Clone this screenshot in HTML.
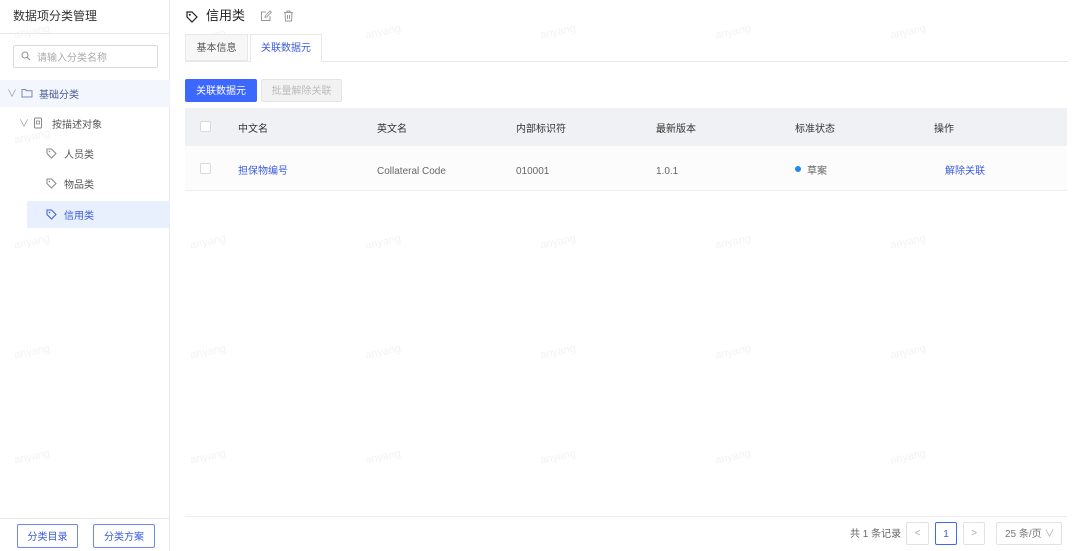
<!DOCTYPE html>
<html><head><meta charset="utf-8"><style>
*{margin:0;padding:0;box-sizing:border-box}
body{width:1080px;height:551px;background:#fff;font-family:"Liberation Sans","Noto Sans CJK SC",sans-serif;font-size:10px;line-height:14px;color:#333;position:relative;overflow:hidden}
.a{position:absolute}
.wm{position:absolute;color:#f3f3f3;font-size:11px;transform:rotate(-12deg)}
.tree{font-size:10px;color:#555}
.th{position:absolute;top:123px;font-size:10px;color:#333}
.td{position:absolute;top:165px;font-size:10px;color:#666}
.cb{position:absolute;width:11px;height:11px;border:1px solid #d9d9d9;background:#fff;border-radius:2px}
</style></head><body>
<!-- watermarks -->
<div class="wm" style="left:14px;top:25px">anyang</div><div class="wm" style="left:190px;top:30px">anyang</div><div class="wm" style="left:365px;top:25px">anyang</div><div class="wm" style="left:540px;top:25px">anyang</div><div class="wm" style="left:715px;top:25px">anyang</div><div class="wm" style="left:890px;top:25px">anyang</div>
<div class="wm" style="left:14px;top:130px">anyang</div><div class="wm" style="left:190px;top:130px">anyang</div><div class="wm" style="left:365px;top:130px">anyang</div><div class="wm" style="left:540px;top:130px">anyang</div><div class="wm" style="left:715px;top:125px">anyang</div><div class="wm" style="left:890px;top:125px">anyang</div>
<div class="wm" style="left:14px;top:235px">anyang</div><div class="wm" style="left:190px;top:235px">anyang</div><div class="wm" style="left:365px;top:235px">anyang</div><div class="wm" style="left:540px;top:235px">anyang</div><div class="wm" style="left:715px;top:235px">anyang</div><div class="wm" style="left:890px;top:235px">anyang</div>
<div class="wm" style="left:14px;top:345px">anyang</div><div class="wm" style="left:190px;top:345px">anyang</div><div class="wm" style="left:365px;top:345px">anyang</div><div class="wm" style="left:540px;top:345px">anyang</div><div class="wm" style="left:715px;top:345px">anyang</div><div class="wm" style="left:890px;top:345px">anyang</div>
<div class="wm" style="left:14px;top:450px">anyang</div><div class="wm" style="left:190px;top:450px">anyang</div><div class="wm" style="left:365px;top:450px">anyang</div><div class="wm" style="left:540px;top:450px">anyang</div><div class="wm" style="left:715px;top:450px">anyang</div><div class="wm" style="left:890px;top:450px">anyang</div>
<!-- sidebar -->
<div class="a" style="left:0;top:0;width:170px;height:551px;border-right:1px solid #e8e8e8"></div>
<div class="a" style="left:13px;top:8px;font-size:12px;line-height:16px;color:#333">数据项分类管理</div>
<div class="a" style="left:0;top:33px;width:170px;border-top:1px solid #e8e8e8"></div>
<div class="a" style="left:13px;top:45px;width:145px;height:23px;border:1px solid #dcdcdc;border-radius:2px"></div>
<svg class="a" style="left:21px;top:51px" width="10" height="10" viewBox="0 0 10 10"><circle cx="4" cy="4" r="3" fill="none" stroke="#999" stroke-width="1.1"/><path d="M6.3 6.3L9 9" stroke="#999" stroke-width="1.1"/></svg>
<div class="a" style="left:37px;top:52px;color:#aaa;font-size:10px">请输入分类名称</div>
<div class="a" style="left:0;top:80px;width:170px;height:27px;background:#f3f6fc"></div>
<div class="a tree" style="left:7px;top:88px;color:#999">∨</div>
<svg class="a" style="left:21px;top:88px" width="12" height="10" viewBox="0 0 12 10"><path d="M1 1.5h3.5l1 1.2H11V9H1z" fill="none" stroke="#7a88b8" stroke-width="1"/></svg>
<div class="a tree" style="left:39px;top:89px;color:#4a5a99">基础分类</div>
<div class="a tree" style="left:19px;top:118px;color:#999">∨</div>
<svg class="a" style="left:33px;top:117px" width="10" height="12" viewBox="0 0 10 12"><rect x="1.5" y="1" width="7" height="10" rx="1" fill="none" stroke="#888"/><rect x="3.5" y="4" width="3" height="3" fill="none" stroke="#888" stroke-width=".8"/></svg>
<div class="a tree" style="left:52px;top:119px">按描述对象</div>
<svg class="a" style="left:46px;top:148px" width="11" height="11" viewBox="0 0 11 11"><path d="M1 1h4.5l4.5 4.5-4.5 4.5L1 5.5z" fill="none" stroke="#888"/><circle cx="3.5" cy="3.5" r=".8" fill="#888"/></svg>
<div class="a tree" style="left:64px;top:149px">人员类</div>
<svg class="a" style="left:46px;top:178px" width="11" height="11" viewBox="0 0 11 11"><path d="M1 1h4.5l4.5 4.5-4.5 4.5L1 5.5z" fill="none" stroke="#888"/><circle cx="3.5" cy="3.5" r=".8" fill="#888"/></svg>
<div class="a tree" style="left:64px;top:179px">物品类</div>
<div class="a" style="left:27px;top:201px;width:143px;height:27px;background:#e8f0fe"></div>
<svg class="a" style="left:46px;top:209px" width="11" height="11" viewBox="0 0 11 11"><path d="M1 1h4.5l4.5 4.5-4.5 4.5L1 5.5z" fill="none" stroke="#3b5bdb"/><circle cx="3.5" cy="3.5" r=".8" fill="#3b5bdb"/></svg>
<div class="a tree" style="left:64px;top:210px;color:#3b5bdb">信用类</div>
<div class="a" style="left:0;top:518px;width:170px;border-top:1px solid #e8e8e8"></div>
<div class="a" style="left:17px;top:524px;width:61px;height:24px;border:1px solid #6f86f0;border-radius:2px;color:#3b5bdb;text-align:center;line-height:22px;padding-top:2px">分类目录</div>
<div class="a" style="left:93px;top:524px;width:62px;height:24px;border:1px solid #6f86f0;border-radius:2px;color:#3b5bdb;text-align:center;line-height:22px;padding-top:2px">分类方案</div>
<!-- header -->
<svg class="a" style="left:186px;top:11px" width="12" height="12" viewBox="0 0 12 12"><path d="M1 1h5l5 5-5 5L1 6z" fill="none" stroke="#222" stroke-width="1.2"/><circle cx="3.8" cy="3.8" r="1" fill="#222"/></svg>
<div class="a" style="left:206px;top:7px;font-size:13px;line-height:18px;color:#222">信用类</div>
<svg class="a" style="left:260px;top:10px" width="12" height="12" viewBox="0 0 12 12"><path d="M10 6v4.5H1.5V2H6" fill="none" stroke="#999"/><path d="M5 7.5l.4-1.8L10 1l1.3 1.3-4.6 4.7z" fill="none" stroke="#999" stroke-width=".9"/></svg>
<svg class="a" style="left:283px;top:10px" width="11" height="12" viewBox="0 0 11 12"><path d="M1 2.5h9M4 2.5V1h3v1.5M2 2.5l.5 8.5h6l.5-8.5M4.5 5v4M6.5 5v4" fill="none" stroke="#999"/></svg>
<!-- tabs -->
<div class="a" style="left:185px;top:61px;width:883px;border-top:1px solid #e8e8e8"></div>
<div class="a" style="left:185px;top:34px;width:63px;height:27px;background:#f7f7f7;border:1px solid #e8e8e8;color:#555;text-align:center;line-height:25px;padding-top:1px">基本信息</div>
<div class="a" style="left:250px;top:34px;width:72px;height:28px;background:#fff;border:1px solid #e8e8e8;border-bottom:none;color:#3b5bdb;text-align:center;line-height:25px;padding-top:1px">关联数据元</div>
<!-- buttons -->
<div class="a" style="left:185px;top:79px;width:72px;height:23px;background:#3d68ff;color:#fff;text-align:center;line-height:21px;padding-top:2px;border-radius:2px">关联数据元</div>
<div class="a" style="left:261px;top:79px;width:81px;height:23px;background:#f2f2f2;border:1px solid #e4e4e4;color:#bbb;text-align:center;line-height:19px;padding-top:2px;border-radius:2px">批量解除关联</div>
<!-- table -->
<div class="a" style="left:185px;top:108px;width:882px;height:38px;background:#f0f1f4"></div>
<div class="a" style="left:185px;top:146px;width:882px;height:45px;background:#fcfcfc;border-bottom:1px solid #eceef2"></div>
<div class="cb" style="left:200px;top:121px"></div>
<div class="th" style="left:238px">中文名</div>
<div class="th" style="left:377px">英文名</div>
<div class="th" style="left:516px">内部标识符</div>
<div class="th" style="left:656px">最新版本</div>
<div class="th" style="left:795px">标准状态</div>
<div class="th" style="left:934px">操作</div>
<div class="cb" style="left:200px;top:163px"></div>
<div class="td" style="left:238px;color:#3b5bdb">担保物编号</div>
<div class="td" style="left:377px">Collateral Code</div>
<div class="td" style="left:516px">010001</div>
<div class="td" style="left:656px">1.0.1</div>
<div class="a" style="left:795px;top:166px;width:6px;height:6px;border-radius:50%;background:#1e88f5"></div>
<div class="td" style="left:807px">草案</div>
<div class="td" style="left:945px;color:#3b5bdb">解除关联</div>
<!-- footer -->
<div class="a" style="left:185px;top:516px;width:882px;border-top:1px solid #eceef2"></div>
<div class="a" style="left:850px;top:528px;color:#666">共 1 条记录</div>
<div class="a" style="left:906px;top:522px;width:23px;height:23px;border:1px solid #e2e2e2;border-radius:2px;color:#aaa;text-align:center;line-height:21px">&lt;</div>
<div class="a" style="left:935px;top:522px;width:22px;height:23px;border:1px solid #3d68ff;border-radius:2px;color:#3b5bdb;text-align:center;line-height:21px;padding-top:1px">1</div>
<div class="a" style="left:963px;top:522px;width:22px;height:23px;border:1px solid #e2e2e2;border-radius:2px;color:#aaa;text-align:center;line-height:21px">&gt;</div>
<div class="a" style="left:996px;top:522px;width:66px;height:23px;border:1px solid #e2e2e2;border-radius:2px;color:#777;line-height:21px;padding-left:8px;padding-top:1px">25 条/页 <span style="color:#aaa">∨</span></div>
</body></html>
